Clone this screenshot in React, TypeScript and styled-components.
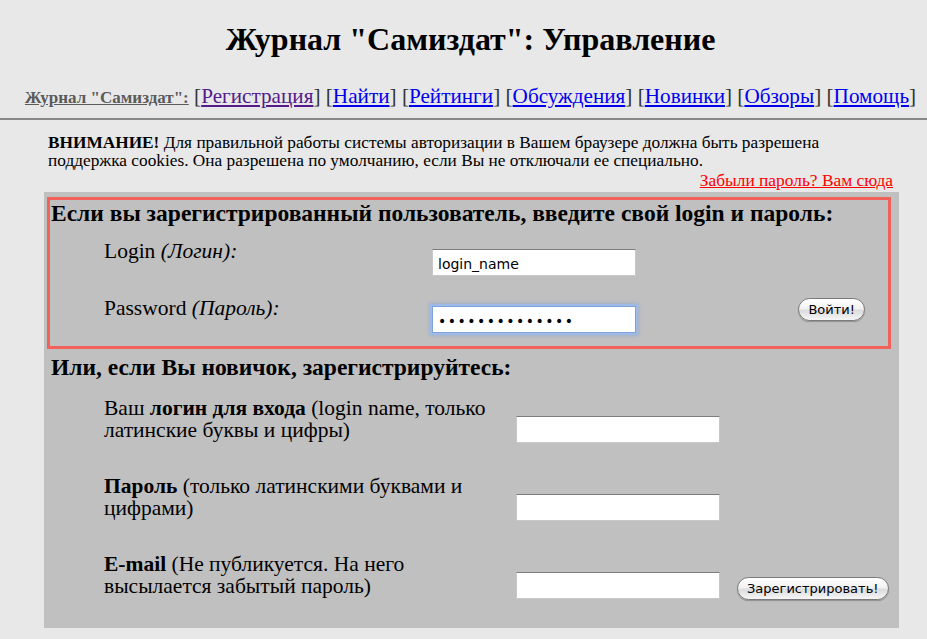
import React from 'react';
import styled, { createGlobalStyle } from 'styled-components';

const GlobalStyle = createGlobalStyle`
  html, body {
    margin: 0;
    padding: 0;
    background: #e8e8e8;
  }
  body {
    font-family: "Liberation Serif", "Times New Roman", serif;
    color: #000;
  }
`;

const navItems = [
  { label: 'Регистрация', visited: true },
  { label: 'Найти' },
  { label: 'Рейтинги' },
  { label: 'Обсуждения' },
  { label: 'Новинки' },
  { label: 'Обзоры' },
  { label: 'Помощь' },
];

const registerFields = [
  { strong: 'логин для входа', before: 'Ваш ', after: ' (login name, только латинские буквы и цифры)', type: 'text' },
  { strong: 'Пароль', before: '', after: ' (только латинскими буквами и цифрами)', type: 'password' },
  { strong: 'E-mail', before: '', after: ' (Не публикуется. На него высылается забытый пароль)', type: 'text', submit: true },
];

export default function App() {
  return (
    <Page>
      <GlobalStyle />
      <Header>
        <Title>Журнал "Самиздат": Управление</Title>
        <Nav>
          <NavLead href="#">Журнал "Самиздат":</NavLead>
          {navItems.map((item) => (
            <React.Fragment key={item.label}>
              {' '}[<NavLink href="#" $visited={item.visited}>{item.label}</NavLink>]
            </React.Fragment>
          ))}
        </Nav>
      </Header>
      <Rule />

      <Notice>
        <b>ВНИМАНИЕ!</b> Для правильной работы системы авторизации в Вашем браузере должна быть разрешена
        поддержка cookies. Она разрешена по умолчанию, если Вы не отключали ее специально.
      </Notice>
      <ForgotRow>
        <ForgotLink href="#">Забыли пароль? Вам сюда</ForgotLink>
      </ForgotRow>

      <Panel>
        <LoginBox>
          <Heading>Если вы зарегистрированный пользователь, введите свой login и пароль:</Heading>
          <LoginRows>
            <LoginRow>
              <Label>Login <Hint>(Логин):</Hint></Label>
              <TextField type="text" defaultValue="login_name" />
            </LoginRow>
            <LoginRow>
              <Label>Password <Hint>(Пароль):</Hint></Label>
              <TextField type="password" defaultValue="12345678901234" $focused />
              <AquaButton type="button">Войти!</AquaButton>
            </LoginRow>
          </LoginRows>
        </LoginBox>

        <Heading $outside>Или, если Вы новичок, зарегистрируйтесь:</Heading>
        <RegisterRows>
          {registerFields.map((f) => (
            <RegisterRow key={f.strong}>
              <Label $wrap>
                {f.before}<b>{f.strong}</b>{f.after}
              </Label>
              <TextField type={f.type} />
              {f.submit && <AquaButton type="button" $offset>Зарегистрировать!</AquaButton>}
            </RegisterRow>
          ))}
        </RegisterRows>
      </Panel>
    </Page>
  );
}

const Page = styled.div`
  width: 927px;
  min-height: 639px;
`;

const Header = styled.div`
  padding-left: 14px;
  text-align: center;
`;

const Title = styled.h1`
  margin: 19px 0 0;
  font-size: 32px;
  line-height: 40px;
  font-weight: bold;
`;

const Nav = styled.div`
  height: 24px;
  margin-top: 25px;
  font-size: 21.2px;
  line-height: 24px;
  color: #333;
  white-space: nowrap;
`;

const NavLead = styled.a`
  font-size: 17px;
  font-weight: bold;
  color: #5a5a5a;
  text-decoration: underline;
`;

const NavLink = styled.a<{ $visited?: boolean }>`
  color: ${(p) => (p.$visited ? '#551a8b' : '#0000ee')};
  text-decoration: underline;
`;

const Rule = styled.div`
  margin-top: 10px;
  height: 2px;
  background: #888;
`;

const Notice = styled.p`
  width: 790px;
  margin: 14px 0 0 48px;
  font-size: 17.3px;
  line-height: 18px;
`;

const ForgotRow = styled.div`
  margin: 1px 34px 0 48px;
  text-align: right;
  font-size: 17.4px;
  line-height: 18px;
`;

const ForgotLink = styled.a`
  color: #ff0000;
  text-decoration: underline;
`;

const Panel = styled.div`
  margin: 3px 28px 0 44px;
  padding: 5px 8px 28px 3px;
  background: #c0c0c0;
`;

const LoginBox = styled.div`
  border: 3px solid #f2625a;
  padding: 0 0 0 1px;
`;

const Heading = styled.h3<{ $outside?: boolean }>`
  margin: ${(p) => (p.$outside ? '5px 0 0 4px' : '0')};
  font-size: 23.5px;
  line-height: 26px;
  font-weight: bold;
`;

const LoginRows = styled.div`
  display: flex;
  flex-direction: column;
  gap: 4px;
  padding: 10px 23px 0 53px;
`;

const LoginRow = styled.div`
  display: grid;
  grid-template-columns: 328px 204px 1fr;
  align-items: start;
  min-height: 53px;
`;

const Label = styled.div<{ $wrap?: boolean }>`
  font-size: 21.5px;
  line-height: 22px;
  margin-top: ${(p) => (p.$wrap ? '0' : '4px')};
  padding-right: ${(p) => (p.$wrap ? '16px' : '0')};
`;

const Hint = styled.i``;

const TextField = styled.input<{ $focused?: boolean }>`
  box-sizing: border-box;
  width: 204px;
  height: 27px;
  margin-top: 13px;
  padding: 2px 5px 0;
  background: #fff;
  border: 1px solid #c8c8c8;
  border-top-color: #7c7c7c;
  font-family: "DejaVu Sans", "Lucida Grande", sans-serif;
  font-size: 14px;
  color: #000;
  outline: none;
  &[type='password'] {
    letter-spacing: 1.5px;
  }
  ${(p) =>
    p.$focused &&
    `
    border-color: #7fa3d8;
    box-shadow: 0 0 0 2px #9dbbe6, 0 0 3px 3px rgba(120, 160, 220, 0.45);
  `}
`;

const AquaButton = styled.button<{ $offset?: boolean }>`
  justify-self: ${(p) => (p.$offset ? 'start' : 'end')};
  margin-top: ${(p) => (p.$offset ? '24px' : '5px')};
  margin-left: ${(p) => (p.$offset ? '17px' : '0')};
  height: 23px;
  padding: 0 9px;
  border: 1px solid #7a7a7a;
  border-radius: 12px;
  background: linear-gradient(#ffffff 0%, #f2f2f2 45%, #dcdcdc 55%, #f6f6f6 100%);
  box-shadow: 0 1px 1px rgba(0, 0, 0, 0.25);
  font-family: "DejaVu Sans", "Lucida Grande", sans-serif;
  font-size: 13px;
  color: #000;
  white-space: nowrap;
  cursor: pointer;
`;

const RegisterRows = styled.div`
  display: flex;
  flex-direction: column;
  gap: 32px;
  margin-top: 17px;
  padding-left: 57px;
`;

const RegisterRow = styled.div`
  display: grid;
  grid-template-columns: 412px 204px auto;
  align-items: start;

  & > input {
    margin-top: 19px;
  }
`;
